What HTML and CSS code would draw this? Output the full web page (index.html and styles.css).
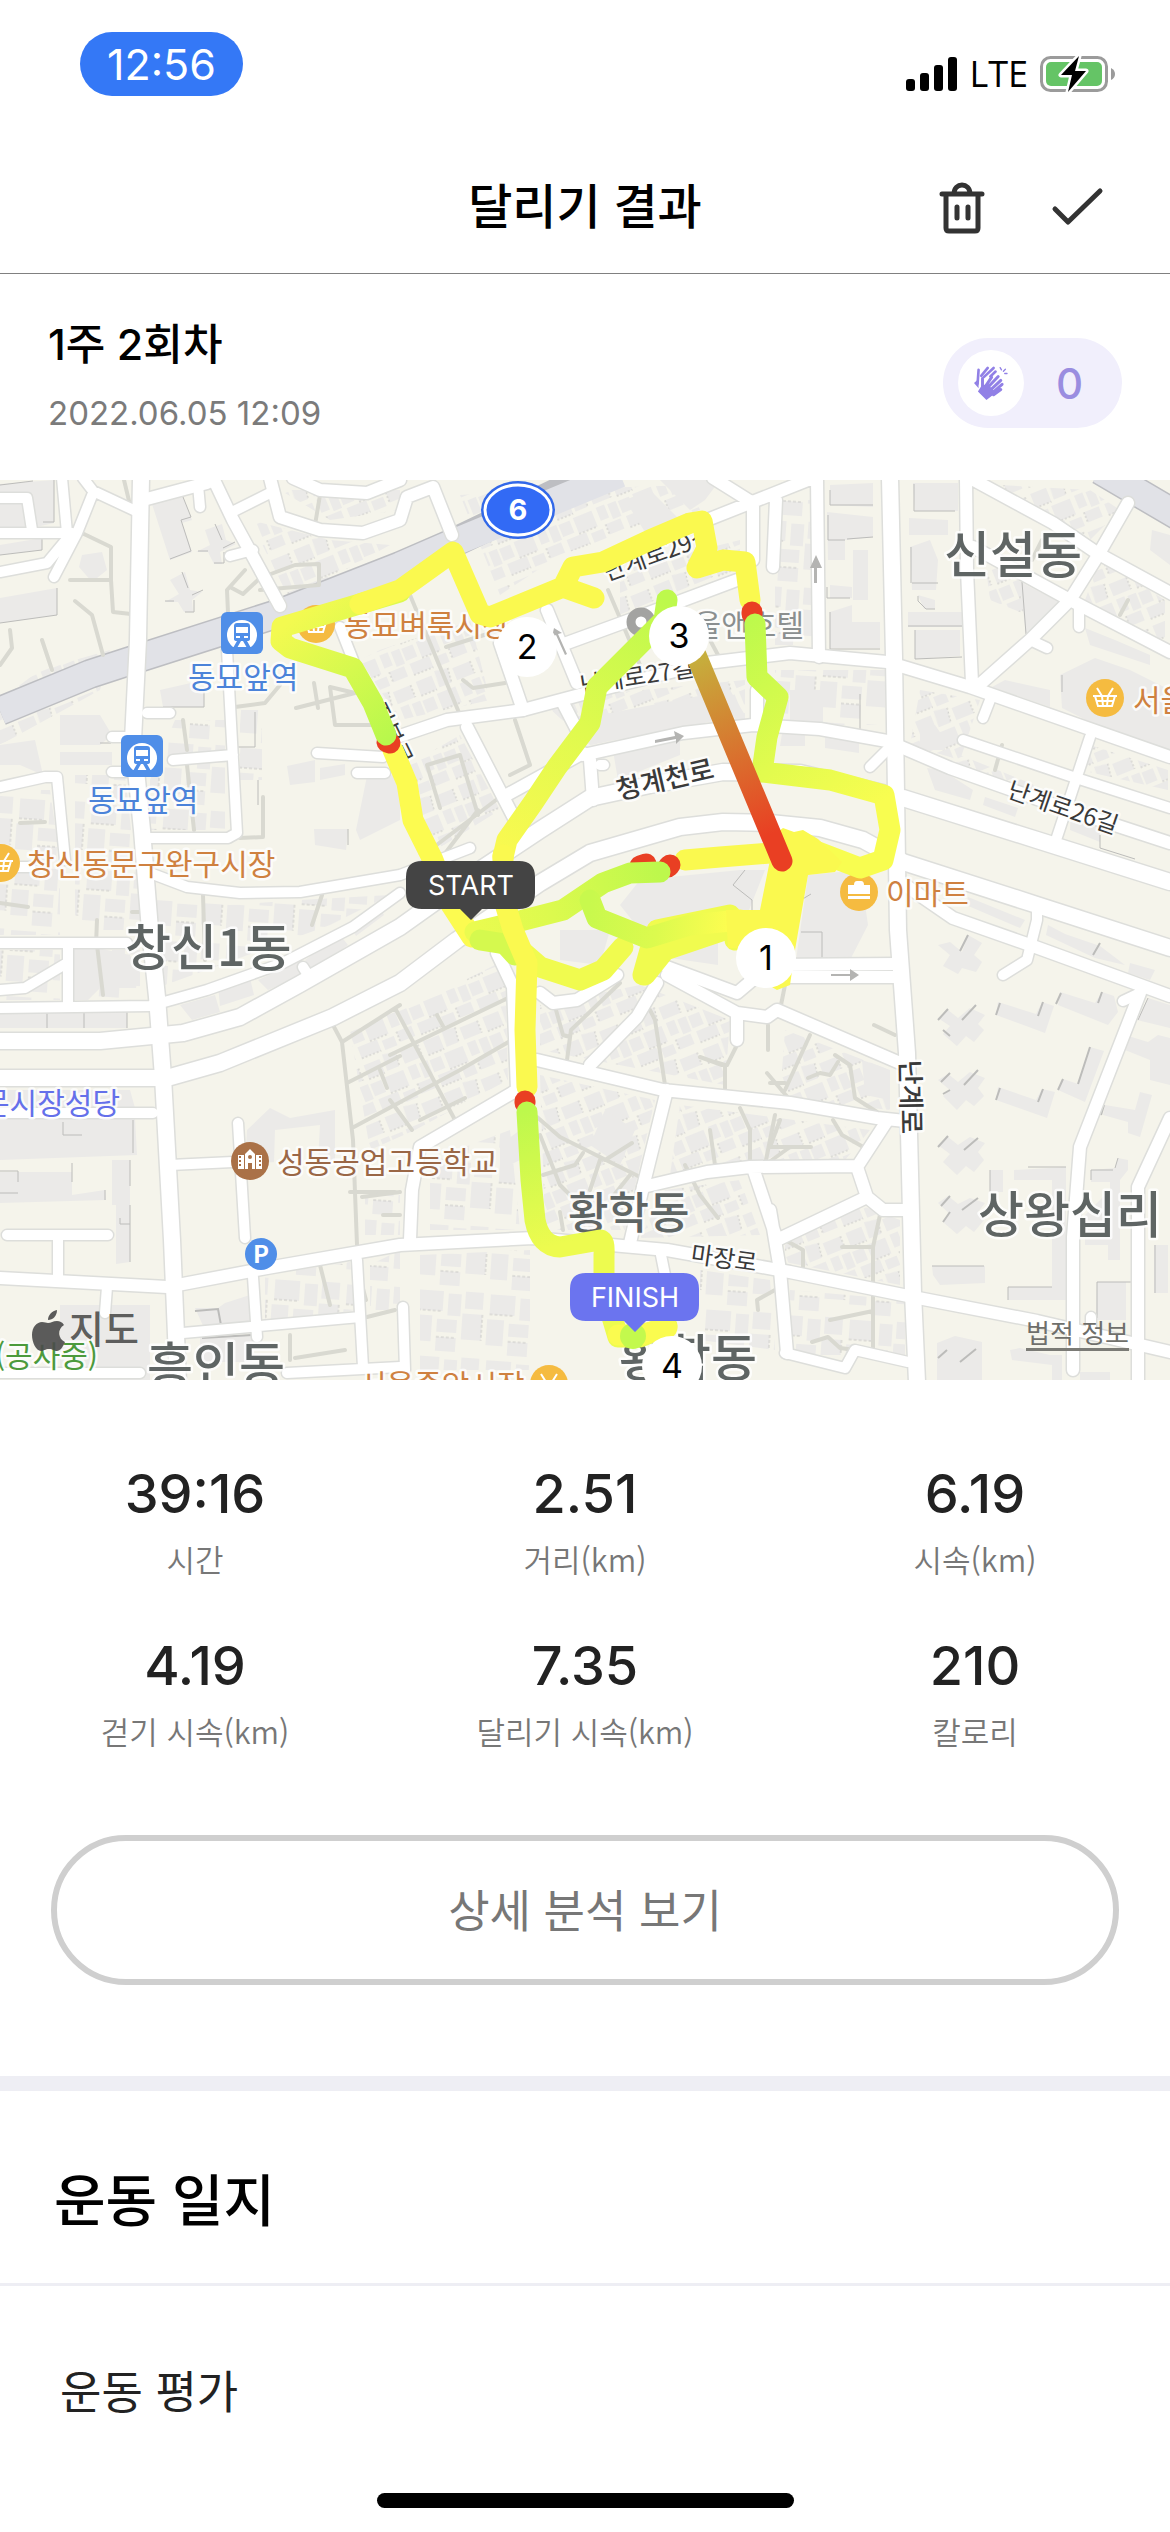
FILE: index.html
```html
<!DOCTYPE html>
<html lang="ko">
<head>
<meta charset="utf-8">
<meta name="viewport" content="width=device-width, initial-scale=1">
<title>달리기 결과</title>
<link rel="stylesheet" href="styles.css">
</head>
<body>
<div class="status-bar">
  <span class="status-time">12:56</span>
  <div class="status-right">
    <svg class="signal" viewBox="0 0 51 34" aria-hidden="true"><rect x="0" y="22" width="9" height="12" rx="3"/><rect x="14" y="16" width="9" height="18" rx="3"/><rect x="28" y="8" width="9" height="26" rx="3"/><rect x="42" y="0" width="9" height="34" rx="3"/></svg>
    <span class="network">LTE</span>
    <svg class="battery" viewBox="0 0 76 40" aria-hidden="true">
      <rect x="1.500" y="3.500" width="65" height="33" rx="9" fill="none" stroke="#9b9b9b" stroke-width="3"/>
      <rect x="6" y="8" width="56" height="24" rx="5" fill="#65c466"/>
      <path d="M71 14q4 2 4 6t-4 6z" fill="#9b9b9b"/>
      <path d="M39 2 21 21h11l-4 17 18-21H35z" fill="#000" stroke="#fff" stroke-width="5" stroke-linejoin="round" paint-order="stroke"/>
    </svg>
  </div>
</div>

<header class="top-bar">
  <h1 class="top-title">달리기 결과</h1>
  <div class="top-actions">
    <button class="icon-button" type="button" aria-label="삭제">
      <svg viewBox="0 0 56 56"><path d="M8 15h40M12 16v33q0 3 3 3h26q3 0 3-3V16M20 15c0-12 16-12 16 0M23 28v11M34 28v11"/></svg>
    </button>
    <button class="icon-button" type="button" aria-label="확인">
      <svg viewBox="0 0 56 56"><path d="M5 30l13 13L50 12"/></svg>
    </button>
  </div>
</header>

<main>
  <section class="session">
    <div>
      <h2 class="session-title">1주 2회차</h2>
      <p class="session-date">2022.06.05 12:09</p>
    </div>
    <button class="claps" type="button" aria-label="박수 0">
      <span class="claps-icon">
        <svg viewBox="0 0 104 104" aria-hidden="true">
          <g fill="none" stroke="#9180e6" stroke-linecap="round" stroke-width="8">
            <path d="M14 12 11 54M22 30 42 6M30 34 60 6M50 32 66 17"/>
            <path d="M26 38v30M34 64 54 34M42 66 74 32M50 74 82 44M56 82 86 56M60 88 82 72" stroke-width="9"/>
            <path d="M80 5l4 7M96 10l-6 6M101 23h-7" stroke-width="4"/>
          </g>
          <path d="M0 52 14 40v28zM22 62 40 54 70 84 54 92 38 104 12 78z" fill="#9180e6"/>
        </svg>
      </span>
      <span class="claps-count">0</span>
    </button>
  </section>

  <div class="map">
    <svg class="map-canvas" viewBox="0 480 1170 900" role="img" aria-label="달린 경로 지도">
      <defs>
        <pattern id="houses" width="64" height="56" patternUnits="userSpaceOnUse" patternTransform="rotate(-22)">
          <path d="M2 4h17v15H2zM23 1l14 2-2 15H22zM41 5h19v13H41zM1 24h12v13H1zM17 23h20v17H17zM42 22h9v14h-9zM54 23h9v16h-9zM3 41h21v12H3zM28 44h13v10H28zM45 41h16v11H45z" fill="#ebeae8"/>
          <path d="M2 19h17M37 3l-2 15M60 5v13M17 40h20M3 53h21M45 41v11" stroke="#cbcbc8" stroke-width="1" stroke-dasharray="2 2" fill="none"/>
        </pattern>
        <pattern id="blocks" width="72" height="66" patternUnits="userSpaceOnUse" patternTransform="rotate(4)">
          <path d="M4 3h25v20H4zM34 5h13v22H34zM51 2h18v17H51zM2 28h17v26H2zM24 31h20v13H24zM49 24h20v26H49zM24 49h20v14H24z" fill="#ebeae8"/>
          <path d="M4 23h25M69 24v26M24 49h20" stroke="#cbcbc8" stroke-width="1" stroke-dasharray="3 2" fill="none"/>
        </pattern>
        <g id="roads-wide">
          <path d="M141 478 138 640 133 740 142 830 150 930 157 997 163 1077 172 1240 178 1382"/>
          <path d="M0 1041H100L183 1033 240 1017 300 984 400 927 480 870 540 830 590 798 650 785 723 772 800 773 903 798 1037 840 1170 882"/>
          <path d="M0 1078H167L220 1063 333 1017 400 983 457 940 540 883 590 853 680 827 723 822 770 823 820 828 863 840 903 862 1037 905 1170 948"/>
          <path d="M890 478 894 657 898 930 907 1053 913 1293 917 1382"/>
        </g>
        <g id="roads-mid">
          <path d="M397 737 447 720 523 710 587 693 707 663 790 653 887 662 970 687 1170 757"/>
          <path d="M970 478 1053 523 1097 553 1172 594M966 478 967 570 972 683M1128 503 1097 557 1070 600 1030 640 978 686M973 547 1070 600 1170 652"/>
          <path d="M583 755 683 733 753 725 820 729 887 741 950 768 1057 806 1170 843"/>
          <path d="M905 885 953 918 1030 945 1140 985 1170 996M1140 993 1080 1147 1073 1237V1370M1170 1118 1138 1187V1380"/>
          <path d="M0 1278 167 1287 267 1268 400 1245 533 1238 667 1250 790 1272 913 1297 1037 1321 1170 1352"/>
          <path d="M537 1060 663 1090 790 1103 877 1118 905 1121M667 1090 643 1187 630 1243M657 983 637 1017 590 1065"/>
          <path d="M777 1010 900 1063M667 975 737 1013 767 1017 777 1010M737 1013V1040M667 967 737 993 770 965 898 964M790 977H898"/>
          <path d="M887 1121 857 1167 867 1197 883 1210H903M643 1187 707 1172 750 1167 857 1166M867 1197 777 1240 753 1168M770 1210 780 1270 787 1353"/>
          <path d="M517 1090 420 1147 412 1190 410 1240M497 953 513 987 517 1090M540 993 553 1003 577 1000 617 975"/>
          <path d="M500 643 523 710M467 727 515 820M547 610 577 683M563 703 577 730M567 643 630 620 737 580M590 760 593 800M503 797 583 753"/>
          <path d="M707 520 813 478M713 478 753 503V560M817 478 819 657M776 500 773 567M757 690V722"/>
          <path d="M213 478 233 520 280 606M270 478 280 517 320 530 363 533 400 520 407 497 433 487 452 535M143 500 207 483M293 478 320 490 367 493 400 480"/>
        </g>
        <g id="roads-thin">
          <path d="M170 1165 233 1162M238 1123 245 1238M7 1235H108M58 1240V1278M107 1287 105 1313M253 1277 257 1337M183 1333 360 1317M357 1260 363 1367M287 1373 400 1367M0 1373H140"/>
          <path d="M0 943H127M68 943V1007M0 1008 150 1006 207 990 283 963 353 927 400 893M0 990 25 988 67 963M0 1113H153M303 967 310 978"/>
          <path d="M150 873 187 887 240 893 300 892 400 875 470 848M227 650 233 760 237 833 228 838H150M173 760 233 755M147 713H170M112 737H135M112 772H130M0 787 45 777 57 777 65 860M0 867H30"/>
          <path d="M83 478 93 491 140 513M93 493 77 533 54 577M0 572 47 563 72 533M0 533H72M0 498H27L32 530M62 478 67 533M198 485 200 507M230 513 270 493M230 556 253 550M340 627 353 660M317 753 383 757M357 773H385"/>
          <path d="M963 740 1073 777 1170 808M1090 737 1057 837M870 767 887 750M1037 908V920L1027 960 1003 975M1030 640 1047 648M1079 605V627M990 700 983 718M403 1307 405 1370M660 1250 668 1290M1123 1001 1140 993M1091 1317V1330M785 1353 845 1368 855 1350 908 1362M600 765H604"/>
        </g>
      </defs>

      <rect y="480" width="1170" height="900" fill="#f5f4eb"/>

      <g fill="url(#houses)">
        <path d="M425 1000 505 960 508 1080 415 1130 370 1150 350 1030zM540 1005 640 985 730 1020 725 1085 540 1050zM540 1075 655 1100 625 1230H545zM680 1105 870 1130 845 1160 670 1175zM785 1030 890 1070V1110L780 1098zM665 1190 740 1180 760 1235 640 1238zM785 1245 860 1205 900 1220V1285L785 1262z"/>
        <path d="M460 495 540 490 690 485 700 510 560 555 500 595zM360 660 380 650 470 620 490 700 400 720zM540 700 745 680V720L590 745zM400 770 460 735 500 810 420 860zM620 570 740 540V570L620 615z"/>
        <path d="M1000 485 1090 490 1120 510 1085 545zM1100 560 1165 600V650L1085 600zM985 560 1050 600 1040 620 990 600zM0 700 40 670 110 650 100 690 0 745zM280 490H400V510L330 520zM250 520 330 540 390 545 290 600zM920 690 980 700 960 760 910 745zM1090 745 1168 770V790L1080 770zM960 755 1060 795 1050 805 950 765z"/>
      </g>
      <g fill="url(#blocks)">
        <path d="M0 790H50L60 860V935H0zM75 775H125L140 910V930H75zM175 720H225V830H150V780zM240 710H262V780H240zM155 900 230 905 300 900 390 895 330 925 165 985zM0 950H60V1000H0zM75 950H140V1000H75z"/>
        <path d="M420 1255 530 1250V1370H420zM265 1275 350 1262 355 1310 265 1325zM365 1195H400V1235H365zM400 1250V1310H370V1265zM790 1290 905 1300V1355H790zM775 500H812V600H775zM775 600H812V645H775zM775 670H885V725H775zM430 1160 510 1130 520 1230H430zM700 1270 770 1280 775 1350 700 1340z"/>
      </g>

      <g fill="#ebeae8">
        <path d="M0 484 54 480V523L0 535zM0 545 42 538V550L0 555zM152 504 183 497 192 520 182 523 192 552 170 560zM205 530 222 524 226 540 236 544 220 552 222 564H214L208 552 196 552 210 545zM170 580 185 572 190 590 202 592 192 600 193 612H184L178 602H165l14-8zM0 598 57 588V615L0 623zM82 555 102 552 107 570 92 582 79 567zM160 690 204 680V707H163zM60 715H100L112 735 100 745H60zM60 752H112V765H60zM0 745 35 740 43 775 20 765H0zM287 766 315 760V782L290 785zM320 768 345 764V775L320 780zM314 829H348L346 850 315 845zM356 830 367 776 400 775V820L360 840z"/>
        <path d="M72 948 98 948 130 955 138 975 136 988H100L88 1000H72zM0 1010H127V1028H0zM0 1090H130L135 1108H0zM0 1118H135L137 1155 0 1160zM0 1172H72V1195L105 1190 106 1200 0 1203zM112 1160H130V1262L116 1264V1205H112zM247 1130 270 1108 290 1118 335 1110V1162H318L320 1125 275 1130 274 1162 245 1165zM60 1305H150V1380H60zM225 1303 250 1295V1330H205L195 1308 218 1308zM200 1338 252 1335V1362H200zM180 1005 215 995 220 1012 192 1020zM218 985 250 978 254 995 220 1006zM258 980 298 962 302 975 268 990zM305 960 340 935 348 945 312 972zM350 925 378 905 384 915 356 936z"/>
        <path d="M620 905 640 880 740 870 765 870 745 920 680 925 640 930zM560 930 610 930 600 965 560 960zM612 745 680 738V755L618 780zM600 715 730 690 745 715 590 745zM625 500 650 490 690 530 650 540zM660 480H720L705 500 690 510zM670 945 718 940V965L670 958z"/>
        <path d="M796 960 808 875 860 870 868 925 850 960zM830 485 873 483V507L830 505zM827 512 873 517V537L845 540V560L828 560zM853 550H868V600H853zM830 585 852 587V598H830zM830 612 852 605V622H880V648H830zM913 483H958V511H915zM909 518 948 520V535H909zM910 547 930 540 938 560 936 590H912zM918 595 935 600V609H924zM908 612H965V627H908zM915 630 960 630V656L915 659zM1020 582 1060 602 1026 635zM1060 675 1095 658 1130 670 1170 690V757L1130 742 1062 708zM992 687 1005 680 1050 690V707zM920 730 935 725 944 738V750H920zM927 768 942 770 973 790 970 800 935 790zM985 797 1018 808 1015 817 983 805zM1071 805 1100 815V842L1070 830zM790 690H823V725H790zM783 728 805 730V746H780zM825 732 859 738V753L825 748zM1115 640 1085 628 1090 645 1150 665V655zM1152 530 1170 535V565L1150 550z"/>
        <path d="M938 945 950 942 962 952 968 935 982 943 974 955 982 962 976 972 962 968 958 974 943 966 950 955zM938 1018 948 1010 958 1018 970 1008 985 1015 978 1024 984 1030 974 1042 966 1036 957 1046 943 1034 950 1026zM938 1080 948 1074 958 1082 970 1072 985 1078 978 1088 984 1096 974 1106 966 1100 957 1110 943 1096 950 1090zM938 1145 948 1137 958 1145 970 1137 985 1143 978 1152 984 1160 974 1172 966 1166 957 1175 943 1162 950 1154zM938 1203 948 1196 958 1204 970 1198 985 1203 978 1212 984 1220 974 1232 966 1226 957 1234 943 1222 950 1214z"/>
        <path d="M998 1002 1036 1014 1042 1002 1054 1006 1045 1033 996 1015zM1060 992 1095 1003 1102 992 1114 996 1118 1012 1108 1025 1058 1005zM998 1087 1036 1100 1042 1089 1055 1092 1047 1118 996 1100zM1090 1047 1104 1051 1085 1102 1058 1090 1063 1079 1078 1084zM990 1170H1003V1192H990zM1014 1170 1066 1167V1300H1008V1287H1052V1180H1014zM932 1266H985V1283L940 1285 933 1275zM1097 1282H1126V1320H1096zM1091 1170 1115 1168 1118 1158 1128 1160V1170L1120 1180V1260H1108V1245H1085V1215L1110 1190V1182H1091zM1125 1035 1148 1042 1158 1035 1170 1038V1085L1150 1080V1060L1125 1050zM1105 1105 1135 1110 1140 1092 1152 1095 1140 1137 1128 1133V1122L1103 1115zM1137 1020 1148 998 1170 1005V1028zM937 1343 955 1336 982 1342V1380H937zM1010 1350 1020 1348 1050 1355 1062 1355V1380H1052V1365L1012 1360zM1154 1245H1168V1293H1154zM1080 1372H1110V1380H1080zM862 1060 890 1070V1100L865 1095z"/>
        <path d="M1048 925 1065 934 1100 946 1125 965 1095 958 1046 935zM1130 963 1155 970 1150 980 1128 973zM968 897 1025 920 1020 928 966 905zM605 1110 635 1130 620 1165 590 1145zM500 1145 520 1130V1160L500 1170z"/>
      </g>
      <g class="shade">
        <path d="M54 480V522H43M0 485 33 481M42 538V550L0 555M183 497 191 517 181 520 191 551 170 559M215 524 222 540M223 548 235 542M214 563H224V552M198 551H208M182 572 188 588M192 595 203 590M185 612H194V600M165 601H174M57 588V615L0 623M204 692V707H163M255 712V747H238M258 780V805M111 732V743H100M127 1010V1028M47 1012V1028M84 1012V1028M133 1120V1153M72 1163V1182M105 1190V1200M130 1160V1186M130 1205V1262M120 1218V1224H130M0 1193H18M0 1171H18V1182M63 1122V1135H82M348 829V845"/>
        <path d="M830 490V505H873M845 540H828V515M847 539 873 537M914 484V511H955M911 547V583M912 583H938M918 596V601L926 609H935M908 626H965M915 630V659L962 657M830 612V649H880M827 587V598H850M1022 582 1026 634M1062 675V692M860 694V731M1100 835V848L1135 859M1137 1282H1097V1318M932 1266H984M1052 1287H1008V1300M990 1170V1192M1066 1167H1028M1091 1180V1170H1113M1115 1168 1118 1158M801 932 822 932V960M801 900 811 894M1148 998 1138 1020M1155 1245V1293M745 870 733 885 752 900V918"/>
        <path class="shade-strong" d="M960 951 968 935M962 1020 976 1005M964 1085 978 1070M964 1150 978 1138M962 1210 978 1198M938 1020 948 1009M941 1082 950 1073M938 1147 948 1136M941 1206 950 1196M943 1030 950 1036M943 1094 950 1090M943 1222 950 1212M1038 1016 1043 1002M996 1015 1000 1003M1056 1004 1061 993M1098 1003 1102 992M1078 1084 1090 1047M1058 1090 1063 1079M996 1100 1000 1088M1038 1102 1043 1089M960 1362 976 1349M938 1358 947 1350M1093 955 1100 943M1124 1050 1128 1040M1101 1115 1104 1105M195 1311 218 1309 221 1325M202 1338 252 1335"/>
      </g>

      <path d="M605 470 453 543 400 566 280 613 133 660 90 674 0 711M1100 470 1185 520" class="rail-edge"/>
      <path d="M620 474 453 543 400 566 280 613 133 660 90 674 0 711M1100 470 1185 520" class="rail"/>

      <g class="alley">
        <path d="M333 1025 342 1042 353 1140 357 1245M342 1042 400 1005M347 1083 400 1056M352 1128 460 1070 512 1040M395 1008 455 1120M390 1055 510 997M420 1120 465 1098M437 1015 444 1028M350 1192H395M383 1215H400M380 1070 387 1088M412 1130 390 1100"/>
        <path d="M537 1117 560 1137 640 1177M540 1135 560 1185 575 1200M543 1175 575 1165 583 1153M600 1160 590 1190M630 1175 610 1200M605 1160 632 1143M556 1010 563 1035 570 1037 567 1060M620 983 571 1030 567 1060M650 1010 655 1020 665 1085M725 1093V1065L715 1062M727 1065 737 1045M700 1057 722 1065M768 1025V1050M767 1073 790 1100M740 1108 750 1130V1170M710 1130 715 1165M685 1165 700 1195 718 1218M775 1115 765 1165 790 1147M560 1212 563 1230M775 1290 757 1300 758 1310"/>
        <path d="M785 985 780 1010M810 1035 785 1090M835 1055 850 1065 855 1098 877 1112M808 1078 820 1073 830 1075 838 1062M833 1120 842 1135 865 1148M770 1147H811M780 1120 770 1147M880 1215 873 1247V1350M842 1247H873M785 1240 803 1250V1268M830 1320 873 1311M812 1342 828 1337 840 1348 855 1350M874 1025 895 1035M785 1083 770 1083"/>
        <path d="M70 580H111L113 612 131 614M84 534 111 547V580M75 601 92 615 103 655M42 640 52 670M0 665 12 648 10 630M320 495 315 525M228 613 227 590 245 570M230 587 243 594 260 578 295 565 319 564V585L260 590M235 707 265 703 280 685M314 683 318 708M296 708 355 693 330 687 335 725H375M183 720 187 750M187 765 194 830M263 797V837L240 838M97 920 96 945M97 945 103 995M124 480 130 505M20 823 45 822M0 903 28 907M203 895 205 960M322 895 312 925M358 1270 366 1300M290 1335V1360M295 1358 345 1350M367 1317 395 1310M362 1197 400 1192M320 1265 330 1305M132 912H142"/>
        <path d="M410 595 460 715M446 647 500 630M463 680 473 688 505 683M478 810 440 860M478 815 460 755 427 765 440 808M515 720 530 765 510 775M500 797 430 850M1120 615 1128 600M1042 540 1032 560M608 590 640 665M710 640 718 655M1002 745 995 770"/>
      </g>

      <g class="road-edge">
        <use href="#roads-thin" stroke-width="13"/><use href="#roads-mid" stroke-width="15"/><use href="#roads-wide" stroke-width="19"/>
      </g>
      <g class="road">
        <use href="#roads-thin" stroke-width="10"/><use href="#roads-mid" stroke-width="12"/><use href="#roads-wide" stroke-width="16"/>
      </g>

      <g fill="#b4b4b2">
        <path d="M814 583V568h-4l6-13 6 13h-5v15zM831 974h19v-5l9 6-9 6v-5h-19zM655 740l20-4-1-5 10 5-8 8v-5l-21 4zM565 655l-9-20-4 2 2-9 8 5-4 1 9 20z"/>
      </g>

      <!-- place labels under the running route -->
      <g class="road-name">
        <text transform="translate(658 554) rotate(-20)" y="8">난계로29길</text>
        <text transform="translate(637 677) rotate(-9)" y="8">난계로27길</text>
        <text transform="translate(1063 808) rotate(19)" y="8">난계로26길</text>
        <text transform="translate(724 1259) rotate(8)" y="8">마장로</text>
        <text transform="translate(391 734) rotate(64)" y="8">지봉로</text>
        <text class="major" transform="translate(910 1097) rotate(89)" y="9">난계로</text>
        <text class="major" transform="translate(665 780) rotate(-13)" y="9">청계천로</text>
      </g>
      <g class="district">
        <text x="125" y="966">창신1동</text>
        <text x="944" y="573">신설동</text>
        <text x="978" y="1233">상왕십리</text>
        <text class="small" x="568" y="1229">황학동</text>
        <text x="619" y="1376">황학동</text>
        <text x="147" y="1384">흥인동</text>
      </g>
      <g class="poi">
        <text x="188" y="688" fill="#4b83d9">동묘앞역</text>
        <text x="88" y="811" fill="#4b83d9">동묘앞역</text>
        <text x="27" y="875" fill="#cf8140">창신동문구완구시장</text>
        <text x="344" y="636" fill="#cf8140">동묘벼룩시장</text>
        <text x="886" y="904" fill="#cf8140">이마트</text>
        <text x="1133" y="711" fill="#cf8140">서울풍물시장</text>
        <text x="359" y="1396" fill="#cf8140">서울중앙시장</text>
        <text x="277" y="1173" fill="#9a6746">성동공업고등학교</text>
        <text x="120" y="1114" text-anchor="end" fill="#6470ea">동대문시장성당</text>
        <text x="98" y="1367" text-anchor="end" fill="#4c9a3c">(공사중)</text>
        <text x="804" y="636" text-anchor="end" fill="#8b8f8f">서울앤호텔</text>
      </g>
      <g>
        <defs>
          <g id="station"><rect width="42" height="42" rx="6" fill="#4f8ee8"/><path d="M12 35a15 15 0 1 1 18 0" fill="#fff"/><path d="M13 14q0-3 3-3h10q3 0 3 3v13q0 2-3 2H16q-3 0-3-2zM16 29h4l-4 7h-4zM22 29h4l4 7h-4z" fill="#4f8ee8"/><path d="M15 15h12v6H15zM15 24h4v2h-4zM23 24h4v2h-4z" fill="#fff"/></g>
          <g id="basket"><circle r="19" fill="#f5bb40"/><path d="M-12-2H12M-10-2-7 8H7L10-2M-3-2-2 8M3-2 2 8M-9 3H9M-8-10-3-2M8-10 3-2" fill="none" stroke="#fff" stroke-width="2"/></g>
        </defs>
        <use href="#station" x="221" y="612"/><use href="#station" x="121" y="735"/>
        <use href="#basket" x="1" y="863"/><use href="#basket" x="316" y="624"/><use href="#basket" x="1105" y="698"/><use href="#basket" x="549" y="1384"/>
        <circle cx="859" cy="892" r="19" fill="#f5bb40"/><path d="M848 885h22v9h-22zM848 896h22v3h-22zM854 885q0-4 3-4h4q3 0 3 4" fill="#fff"/>
        <circle cx="250" cy="1161" r="19" fill="#aa7147"/>
        <path d="M238 1155h6v14h-6zM256 1155h6v14h-6zM245 1169v-15l5-5 5 5v15h-3v-6h-4v6z" fill="#fff"/><circle cx="250" cy="1157" r="2" fill="#aa7147"/>
        <path d="M240 1156v12M260 1156v12" stroke="#aa7147" stroke-width="2" stroke-dasharray="2 2"/>
        <circle cx="261" cy="1254" r="16" fill="#4f8ee8"/><text x="261" y="1263" class="parking">P</text>
        <circle cx="641" cy="622" r="10" fill="#fff" stroke="#a3a3a1" stroke-width="9"/>
      </g>
      <g class="shield">
        <ellipse cx="518" cy="510" rx="37" ry="29" fill="#3268e8"/><ellipse cx="518" cy="510" rx="33" ry="25" fill="#326af5" stroke="#fff" stroke-width="3"/>
        <text x="518" y="520">6</text>
      </g>

      <!-- running route, coloured by pace -->
      <defs>
        <linearGradient id="g-west" gradientUnits="userSpaceOnUse" x1="290" y1="620" x2="388" y2="740"><stop stop-color="#f3fa50"/><stop offset="1" stop-color="#b8f84c"/></linearGradient>
        <linearGradient id="g-centre" gradientUnits="userSpaceOnUse" x1="667" y1="600" x2="505" y2="860"><stop stop-color="#bdf94c"/><stop offset=".5" stop-color="#dffa4e"/><stop offset="1" stop-color="#faf950"/></linearGradient>
        <linearGradient id="g-east" gradientUnits="userSpaceOnUse" x1="755" y1="615" x2="885" y2="800"><stop stop-color="#bdf94c"/><stop offset=".6" stop-color="#e2fb4e"/><stop offset="1" stop-color="#f8fd50"/></linearGradient>
        <linearGradient id="g-south" gradientUnits="userSpaceOnUse" x1="527" y1="1110" x2="560" y2="1245"><stop stop-color="#bdf84c"/><stop offset="1" stop-color="#edfb4f"/></linearGradient>
        <linearGradient id="g-fast" gradientUnits="userSpaceOnUse" x1="695" y1="660" x2="770" y2="835"><stop stop-color="#c6ae3c"/><stop offset="1" stop-color="#e93f23"/></linearGradient>
        <linearGradient id="g-bank" gradientUnits="userSpaceOnUse" x1="590" y1="900" x2="730" y2="925"><stop stop-color="#c8f94d"/><stop offset=".5" stop-color="#dcfa4e"/><stop offset="1" stop-color="#fdfd50"/></linearGradient>
        <linearGradient id="g-start" gradientUnits="userSpaceOnUse" x1="475" y1="930" x2="660" y2="870"><stop stop-color="#eafb4f"/><stop offset=".4" stop-color="#dcfa4e"/><stop offset="1" stop-color="#bdf84c"/></linearGradient>
      </defs>
      <g class="route">
        <path d="M393 750 407 783 413 820 433 860 450 903 472 937" stroke="#fcfb50"/>
        <path d="M387 742 390 743" stroke="#e93f23"/>
        <path d="M386 735 373 703 353 668 290 648 281 641 282 627 400 592" stroke="url(#g-west)"/>
        <path d="M360 604 400 590 453 552 480 614 490 617 563 587 594 598M563 587 573 567 603 562 650 540 690 523 702 521 707 548 697 568 723 560 745 562 750 600" stroke="#faf94f"/>
        <path d="M752 612V614" stroke="#e93f23"/>
        <path d="M755 624 757 677 778 697 767 737 762 772 830 780 884 795 890 830 883 860 860 868 813 850" stroke="url(#g-east)"/>
        <path d="M685 860 720 857 770 853" stroke="#faf94f"/>
        <path d="M640 866 646 864M668 867 670 865" stroke="#e93f23"/>
        <path d="M490 940 517 947 540 967 580 980 603 970 623 947M643 975 650 950M657 930 730 915M735 940 760 925M645 975 665 950 730 928" stroke="#f0fb4f"/>
        <path d="M475 932 520 921 563 910 603 883 630 873 660 872" stroke="url(#g-start)"/>
        <path d="M590 900 597 918 647 938 690 925 740 920" stroke="url(#g-bank)"/>
        <path d="M480 940 505 944 515 955" stroke="#d5f94e"/>
        <path d="M667 600 664 620 647 637 597 687 590 723 557 767 533 803 507 840 503 857" stroke="url(#g-centre)"/>
        <path d="M503 855 503 897 513 930 527 963 525 1030 527 1087" stroke="#faf94f"/>
        <path d="M525 1101V1103" stroke="#e93f23"/>
        <path d="M527 1112 531 1180 535 1220 Q540 1246 560 1247L600 1240Q605 1240 604 1255V1290L618 1337 640 1337 667 1326" stroke="url(#g-south)"/>
        <path d="M618 1335H640L667 1328" stroke="#fafb4f"/>
        <path d="M770 838 783 828 794 832 803 830 818 839 842 862 835 872 808 875 795 950 790 985 777 990 760 980 745 948 728 948 726 910 760 910 770 860z" stroke="none" fill="#faf94f"/>
        <path d="M696 655 782 861" stroke="url(#g-fast)"/>
      </g>
      <circle cx="633" cy="1336" r="13" fill="#c3f94d"/>

      <g class="km">
        <circle cx="766" cy="958" r="30"/><text x="766" y="970">1</text>
        <circle cx="527" cy="647" r="30"/><text x="527" y="659">2</text>
        <circle cx="679" cy="636" r="30"/><text x="679" y="648">3</text>
        <circle cx="672" cy="1366" r="30"/><text x="672" y="1378">4</text>
      </g>
      <g class="flag">
        <path d="M422 861H519q16 0 16 16V893q0 16-16 16H482l-11 11-11-11H422q-16 0-16-16V877q0-16 16-16z" fill="#444"/>
        <text x="471" y="895">START</text>
        <path d="M586 1273H683q16 0 16 16V1305q0 16-16 16H646l-11 11-11-11H586q-16 0-16-16V1289q0-16 16-16z" fill="#6b74ef"/>
        <text x="635" y="1307">FINISH</text>
      </g>
      <g class="attribution">
        <path d="M57 1310c0 6-4 10-9 10 0-5 4-9 9-10zM48 1323c3 0 5-2 9-2 3 0 5 1 7 4-7 4-6 14 1 17-2 5-5 9-8 9-3 0-4-2-8-2s-5 2-8 2c-5 0-9-9-9-16 0-8 5-13 10-13 3 0 4 1 6 1z"/>
        <text x="69" y="1343">지도</text>
      </g>
    </svg>
    <a class="map-legal" href="#legal">법적 정보</a>
  </div>

  <dl class="stats">
    <div class="stat"><dd>39:16</dd><dt>시간</dt></div>
    <div class="stat"><dd>2.51</dd><dt>거리(km)</dt></div>
    <div class="stat"><dd>6.19</dd><dt>시속(km)</dt></div>
    <div class="stat"><dd>4.19</dd><dt>걷기 시속(km)</dt></div>
    <div class="stat"><dd>7.35</dd><dt>달리기 시속(km)</dt></div>
    <div class="stat"><dd>210</dd><dt>칼로리</dt></div>
  </dl>

  <div class="detail">
    <button class="detail-button" type="button">상세 분석 보기</button>
  </div>

  <section class="journal">
    <h2 class="journal-title">운동 일지</h2>
    <h3 class="journal-item">운동 평가</h3>
  </section>
</main>
<div class="home-indicator"></div>
</body>
</html>
```
FILE: styles.css
```css
* {
  box-sizing: border-box;
}

body {
  margin: 0;
  background: #fff;
  color: #000;
  font-family: Inter, "Noto Sans CJK KR", sans-serif;
}

h1, h2, h3, p, dl, dd {
  margin: 0;
  font-weight: 500;
}

button {
  padding: 0;
  border: 0;
  background: none;
  font: inherit;
  cursor: pointer;
}

/* status bar */
.status-bar {
  display: flex;
  justify-content: space-between;
  align-items: flex-start;
  padding: 32px 54px 44px 80px;
}

.status-time {
  padding: 0 27px;
  border-radius: 32px;
  background: #3478f6;
  color: #fff;
  font-size: 43px;
  line-height: 64px;
}

.status-right {
  display: flex;
  align-items: center;
  gap: 12px;
  padding-top: 22px;
}

.signal {
  width: 51px;
  height: 34px;
}

.network {
  font-family: "Open Sans", sans-serif;
  font-size: 36px;
  font-weight: 500;
  line-height: 40px;
}

.battery {
  width: 76px;
  height: 40px;
}

/* title bar */
.top-bar {
  display: grid;
  grid-template-columns: 1fr auto 1fr;
  align-items: center;
  padding: 26px 64px 26px 64px;
  border-bottom: 1px solid #808080;
}

.top-title {
  grid-column: 2;
  font-size: 48px;
  line-height: 81px;
}

.top-actions {
  display: flex;
  justify-content: flex-end;
  gap: 60px;
}

.icon-button svg {
  display: block;
  width: 56px;
  height: 56px;
  fill: none;
  stroke: #333;
  stroke-width: 5;
  stroke-linecap: round;
  stroke-linejoin: round;
}

/* session summary */
.session {
  display: flex;
  justify-content: space-between;
  align-items: flex-start;
  padding: 42px 48px 47px 48px;
}

.session-title {
  margin-bottom: 21px;
  font-size: 43px;
  line-height: 56px;
}

.session-date {
  color: #7b7b7b;
  font-size: 33px;
  font-weight: 400;
  line-height: 40px;
}

.claps {
  display: flex;
  align-items: center;
  gap: 32px;
  height: 90px;
  margin-top: 22px;
  padding: 0 39px 0 15px;
  border-radius: 45px;
  background: #f1effc;
}

.claps-icon {
  display: grid;
  place-items: center;
  width: 66px;
  height: 66px;
  border-radius: 50%;
  background: #fff;
}

.claps-icon svg {
  width: 34px;
  height: 34px;
}

.claps-count {
  color: #9a8de0;
  font-size: 42px;
  font-weight: 500;
}

/* map */
.map {
  position: relative;
  font-family: "Noto Sans CJK KR", sans-serif;
}

.map-canvas {
  display: block;
  width: 100%;
  height: auto;
}

.road, .road-edge, .alley, .rail, .rail-edge {
  fill: none;
  stroke-linejoin: round;
}

.road {
  stroke: #fff;
  stroke-linecap: round;
}

.road-edge {
  stroke: #dddedb;
  stroke-linecap: round;
}

.alley {
  stroke: #d9d9d1;
  stroke-width: 4;
  stroke-linecap: round;
}

.rail {
  stroke: #e1e2e7;
  stroke-width: 27;
}

.rail-edge {
  stroke: #bdbec2;
  stroke-width: 30;
}

.shade {
  fill: none;
  stroke: #bcbcba;
  stroke-width: 1;
}

.shade-strong {
  stroke-width: 2;
}

.road-name text, .district text, .poi text {
  stroke: #fff;
  stroke-width: 5px;
  stroke-opacity: 0.8;
  stroke-linejoin: round;
  paint-order: stroke;
}

.road-name text {
  fill: #3a3a3a;
  font-size: 24px;
  text-anchor: middle;
}

.road-name .major {
  font-size: 27px;
  font-weight: 500;
}

.district text {
  fill: #5f6564;
  font-size: 50px;
  font-weight: 500;
}

.district .small {
  font-size: 44px;
}

.poi text {
  font-size: 30px;
  font-weight: 400;
}

.parking {
  fill: #fff;
  font-size: 24px;
  font-weight: 700;
  text-anchor: middle;
}

.shield text {
  fill: #fff;
  font: 700 29px Inter, sans-serif;
  text-anchor: middle;
}

.route {
  fill: none;
  stroke-width: 21;
  stroke-linecap: round;
  stroke-linejoin: round;
}

.km circle {
  fill: #fff;
}

.km text {
  font: 400 34px Inter, sans-serif;
  text-anchor: middle;
}

.flag text {
  fill: #fff;
  font: 400 27px Inter, sans-serif;
  text-anchor: middle;
}

.attribution {
  fill: #4a4a4a;
  fill-opacity: 0.9;
  font-size: 38px;
  font-weight: 500;
}

.map-legal {
  position: absolute;
  right: 41px;
  bottom: 29px;
  border-bottom: 3px solid #7b7b76;
  color: #6f6f6b;
  font-size: 26px;
  line-height: 32px;
  text-decoration: none;
}

/* figures */
.stats {
  display: grid;
  grid-template-columns: repeat(3, 1fr);
  row-gap: 51px;
  padding: 82px 0 80px;
  text-align: center;
}

.stat dd {
  margin-bottom: 11px;
  color: #222;
  font-size: 54px;
  line-height: 64px;
}

.stat dt {
  padding-bottom: 2px;
  color: #777;
  font-family: "Noto Sans CJK KR", sans-serif;
  font-size: 31px;
  font-weight: 350;
  line-height: 44px;
}

.detail {
  padding: 0 51px 91px;
}

.detail-button {
  display: block;
  width: 100%;
  height: 150px;
  padding-bottom: 4px;
  border: 6px solid #cfcfcf;
  border-radius: 75px;
  color: #777;
  font-size: 45px;
}

/* journal */
.journal {
  border-top: 15px solid #eeeef4;
}

.journal-title {
  padding: 70px 54px 42px;
  border-bottom: 3px solid #eeeef4;
  font-size: 56px;
  line-height: 80px;
}

.journal-item {
  padding: 77px 60px 70px;
  color: #222;
  font-size: 45px;
  font-weight: 400;
  line-height: 60px;
}

.home-indicator {
  width: 417px;
  height: 15px;
  margin: 0 auto 24px;
  border-radius: 8px;
  background: #000;
}
```
